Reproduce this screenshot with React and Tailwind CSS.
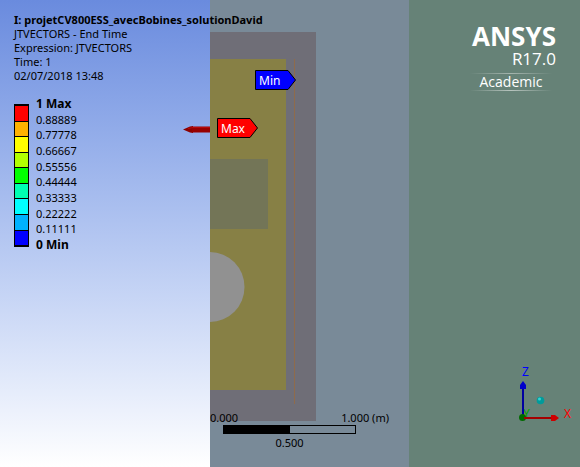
import React from "react";

const legend = [
  { label: "1 Max", color: "bg-[#ff0000]" },
  { label: "0.88889", color: "bg-[#ffb200]" },
  { label: "0.77778", color: "bg-[#ffff00]" },
  { label: "0.66667", color: "bg-[#b2ff00]" },
  { label: "0.55556", color: "bg-[#00ff00]" },
  { label: "0.44444", color: "bg-[#00ffb2]" },
  { label: "0.33333", color: "bg-[#00ffff]" },
  { label: "0.22222", color: "bg-[#00b2ff]" },
  { label: "0.11111", color: "bg-[#0000ff]" },
  { label: "0 Min" },
];

function Legend() {
  return (
    <div className="mt-[14px] flex gap-[7px]">
      <div className="mt-[7px] flex h-[143px] w-[15px] flex-col divide-y divide-black border border-t-2 border-b-2 border-black">
        {legend.filter((s) => s.color).map((s) => (
          <div key={s.label} className={`flex-1 ${s.color}`} />
        ))}
      </div>
      <ul className="flex h-[155px] flex-col justify-between">
        {legend.map((s, i) => (
          <li
            key={s.label}
            className={i === 0 || i === 9 ? "text-[12px] leading-[14px] font-bold" : "text-[11px] leading-[14px]"}
          >
            {s.label}
          </li>
        ))}
      </ul>
    </div>
  );
}

function Probe({ label, className, fill }) {
  return (
    <div className={`absolute flex h-5 w-[41px] items-center pl-1 text-[12px] text-white ${className}`}>
      <svg className="absolute inset-0" width="41" height="20" aria-hidden="true">
        <path d="M.5 .5H33L40.5 10L33 19.5H.5Z" fill={fill} stroke="#000" />
      </svg>
      <span className="relative pt-px">{label}</span>
    </div>
  );
}

function Model() {
  return (
    <svg className="absolute top-0 left-0" width="199" height="440" aria-hidden="true">
      <rect y="32" width="106" height="389" fill="#6f6e77" />
      <rect y="59" width="76" height="331" fill="#878045" />
      <rect y="159" width="58" height="70" fill="#737557" />
      <path d="M0 252A34.500 35 0 0 1 0 322Z" fill="#919191" />
      <path d="M84.500 59V404" stroke="#8f6b4b" />
    </svg>
  );
}

function ScaleBar() {
  return (
    <div className="relative mt-auto mb-[17px] flex flex-col text-[11px] leading-[14px]">
      <div className="flex justify-between pr-5">
        <span>0.000</span>
        <span>1.000 (m)</span>
      </div>
      <div className="ml-[13px] flex h-[9px] w-[133px] border border-black">
        <div className="w-1/2 bg-black" />
      </div>
      <div className="mt-[2px] ml-[13px] w-[133px] text-center">0.500</div>
    </div>
  );
}

function Brand() {
  return (
    <div className="flex flex-col items-end pt-5 pr-6 font-['Open_Sans',sans-serif] text-white">
      <div className="text-[26px] leading-8 font-bold">ANSYS</div>
      <div className="text-[17px] leading-[14px]">R17.0</div>
      <div className="mt-[7px] mr-1 w-[82px]">
        <div className="h-px bg-linear-to-r from-transparent via-[#a5b5ae] to-transparent" />
        <div className="text-center text-[14px] leading-4">Academic</div>
        <div className="h-px bg-linear-to-r from-transparent via-[#b7c4be] to-transparent" />
      </div>
    </div>
  );
}

function Triad() {
  return (
    <svg className="mt-auto mr-1 mb-9 self-end" width="66" height="70" viewBox="0 -4 66 70" role="img" aria-label="Axes X Y Z">
      <g fontFamily="Noto Sans, sans-serif" fontSize="12">
        <text x="12" y="11" fill="#0000ff">Z</text>
        <text x="54" y="53" fill="#ff0000">X</text>
        <text x="13" y="53" fill="#00a000">Y</text>
      </g>
      <path d="M13 53V22" stroke="#0000a0" strokeWidth="2" />
      <path d="M13 16L16 20V24H10V20Z" fill="#0000ca" />
      <circle cx="12.500" cy="52.500" r="3.500" fill="#006b00" />
      <path d="M14 53H43" stroke="#a50000" strokeWidth="2" />
      <path d="M49 53L45 56H41V50H45Z" fill="#ce0000" />
      <circle cx="30.500" cy="35.500" r="3.800" fill="#009b9b" />
      <circle cx="29.500" cy="34" r="1.500" fill="#35d2d2" />
    </svg>
  );
}

export default function App() {
  return (
    <main className="flex min-h-screen overflow-hidden font-['Noto_Sans',sans-serif] text-black">
      <section className="relative z-10 w-[210px] shrink-0 bg-linear-to-b from-[#6a8bde] to-white pt-[13px] pl-[14px]">
        <div className="text-[11px] leading-[14px]">
          <h1 className="font-bold whitespace-nowrap">I: projetCV800ESS_avecBobines_solutionDavid</h1>
          <p>JTVECTORS - End Time</p>
          <p>Expression: JTVECTORS</p>
          <p>Time: 1</p>
          <p>02/07/2018 13:48</p>
        </div>
        <Legend />
        <svg className="absolute top-[124px] right-0" width="27" height="11" aria-hidden="true">
          <path d="M0 5.500L7 2.500L10 2V9L7 8.500Z" fill="#8c0000" />
          <path d="M9 2.500H27V8.500H9Z" fill="#970000" />
          <path d="M5 4.500L10 3.500H27" stroke="#b90909" fill="none" />
        </svg>
      </section>
      <section className="relative flex w-[199px] shrink-0 flex-col bg-[#798a98]">
        <Model />
        <Probe label="Min" fill="#0000ff" className="top-[70px] left-[45px]" />
        <Probe label="Max" fill="#ff0000" className="top-[118px] left-[7px]" />
        <ScaleBar />
      </section>
      <section className="flex min-w-0 flex-1 flex-col bg-[#668277]">
        <Brand />
        <Triad />
      </section>
    </main>
  );
}
